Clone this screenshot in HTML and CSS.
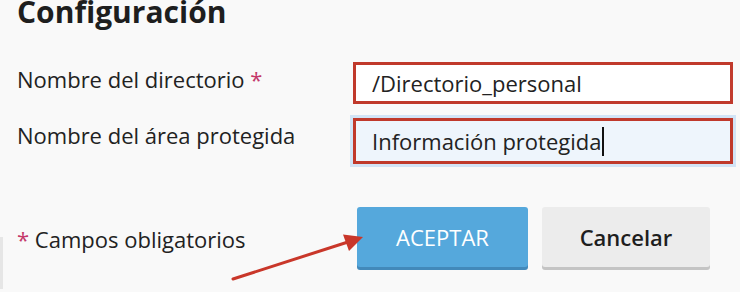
FILE: index.html
```html
<!DOCTYPE html>
<html lang="es">
<head>
<meta charset="utf-8">
<title>Configuración</title>
<link rel="stylesheet" href="styles.css">
</head>
<body>
<div class="page">
  <h1 class="title">Configuración</h1>
  <div class="form">
    <div class="label">Nombre del directorio <span class="req">*</span></div>
    <div class="field">/Directorio_personal</div>
    <div class="label">Nombre del área protegida</div>
    <div class="field focus">Información protegida<span class="caret"></span></div>
  </div>
  <div class="footer">
    <div class="note"><span class="req">*</span> Campos obligatorios</div>
    <div class="actions">
      <button class="btn primary">ACEPTAR</button>
      <button class="btn secondary">Cancelar</button>
    </div>
  </div>
  <div class="edge"></div>
  <svg class="arrow" width="740" height="292" viewBox="0 0 740 292">
    <line x1="233" y1="282" x2="348" y2="245" stroke="#c9372a" stroke-width="3" stroke-linecap="round"/>
    <polygon points="363,240 343,237.5 349,254" fill="#c9372a"/>
  </svg>
</div>
</body>
</html>
```
FILE: styles.css
```css
html, body {
  margin: 0;
  padding: 0;
  background: #f9f9f9;
}
body {
  font-family: "Open Sans", "Liberation Sans", sans-serif;
  color: #222;
  width: 740px;
  height: 292px;
  overflow: hidden;
}
.page {
  position: relative;
  width: 740px;
  height: 292px;
  padding-left: 17px;
  box-sizing: border-box;
}
.title {
  margin: -3px 0 35px;
  font-size: 30px;
  line-height: 30px;
  font-weight: 700;
  color: #1e1e1e;
}
.form {
  display: grid;
  grid-template-columns: 336px 380px;
  row-gap: 14px;
}
.label {
  font-size: 22px;
  line-height: 30px;
  padding-top: 2px;
  color: #222;
}
.req {
  color: #c4386a;
}
.field {
  box-sizing: border-box;
  height: 42px;
  border: 3px solid #c0392b;
  background: #fff;
  padding: 0 16px;
  font-size: 22px;
  line-height: 36px;
  color: #222;
  display: flex;
  align-items: center;
}
.field.focus {
  height: 46px;
  background: #eef5fc;
  box-shadow: 0 0 0 3px #d2e4f6;
}
.caret {
  display: inline-block;
  width: 2px;
  height: 29px;
  background: #111;
  margin-left: 1px;
}
.footer {
  display: flex;
  align-items: center;
  margin-top: 43px;
}
.note {
  width: 340px;
  font-size: 22px;
  line-height: 30px;
  padding-top: 3px;
}
.actions {
  display: flex;
  gap: 14px;
}
.btn {
  font-family: "Open Sans", "Liberation Sans", sans-serif;
  font-size: 22px;
  height: 60px;
  border: none;
  border-radius: 3px;
  padding: 0;
  margin: 0;
}
.primary {
  width: 171px;
  background: #55a8dc;
  color: #fff;
  box-shadow: 0 3px 0 #4289ba;
}
.secondary {
  width: 168px;
  background: #ececec;
  color: #1e1e1e;
  font-weight: 600;
  box-shadow: 0 3px 0 #c4c4c4;
}
.edge {
  position: absolute;
  left: 0;
  top: 240px;
  width: 3px;
  height: 52px;
  background: #e6e6e6;
}
.arrow {
  position: absolute;
  left: 0;
  top: 0;
  pointer-events: none;
}
```
